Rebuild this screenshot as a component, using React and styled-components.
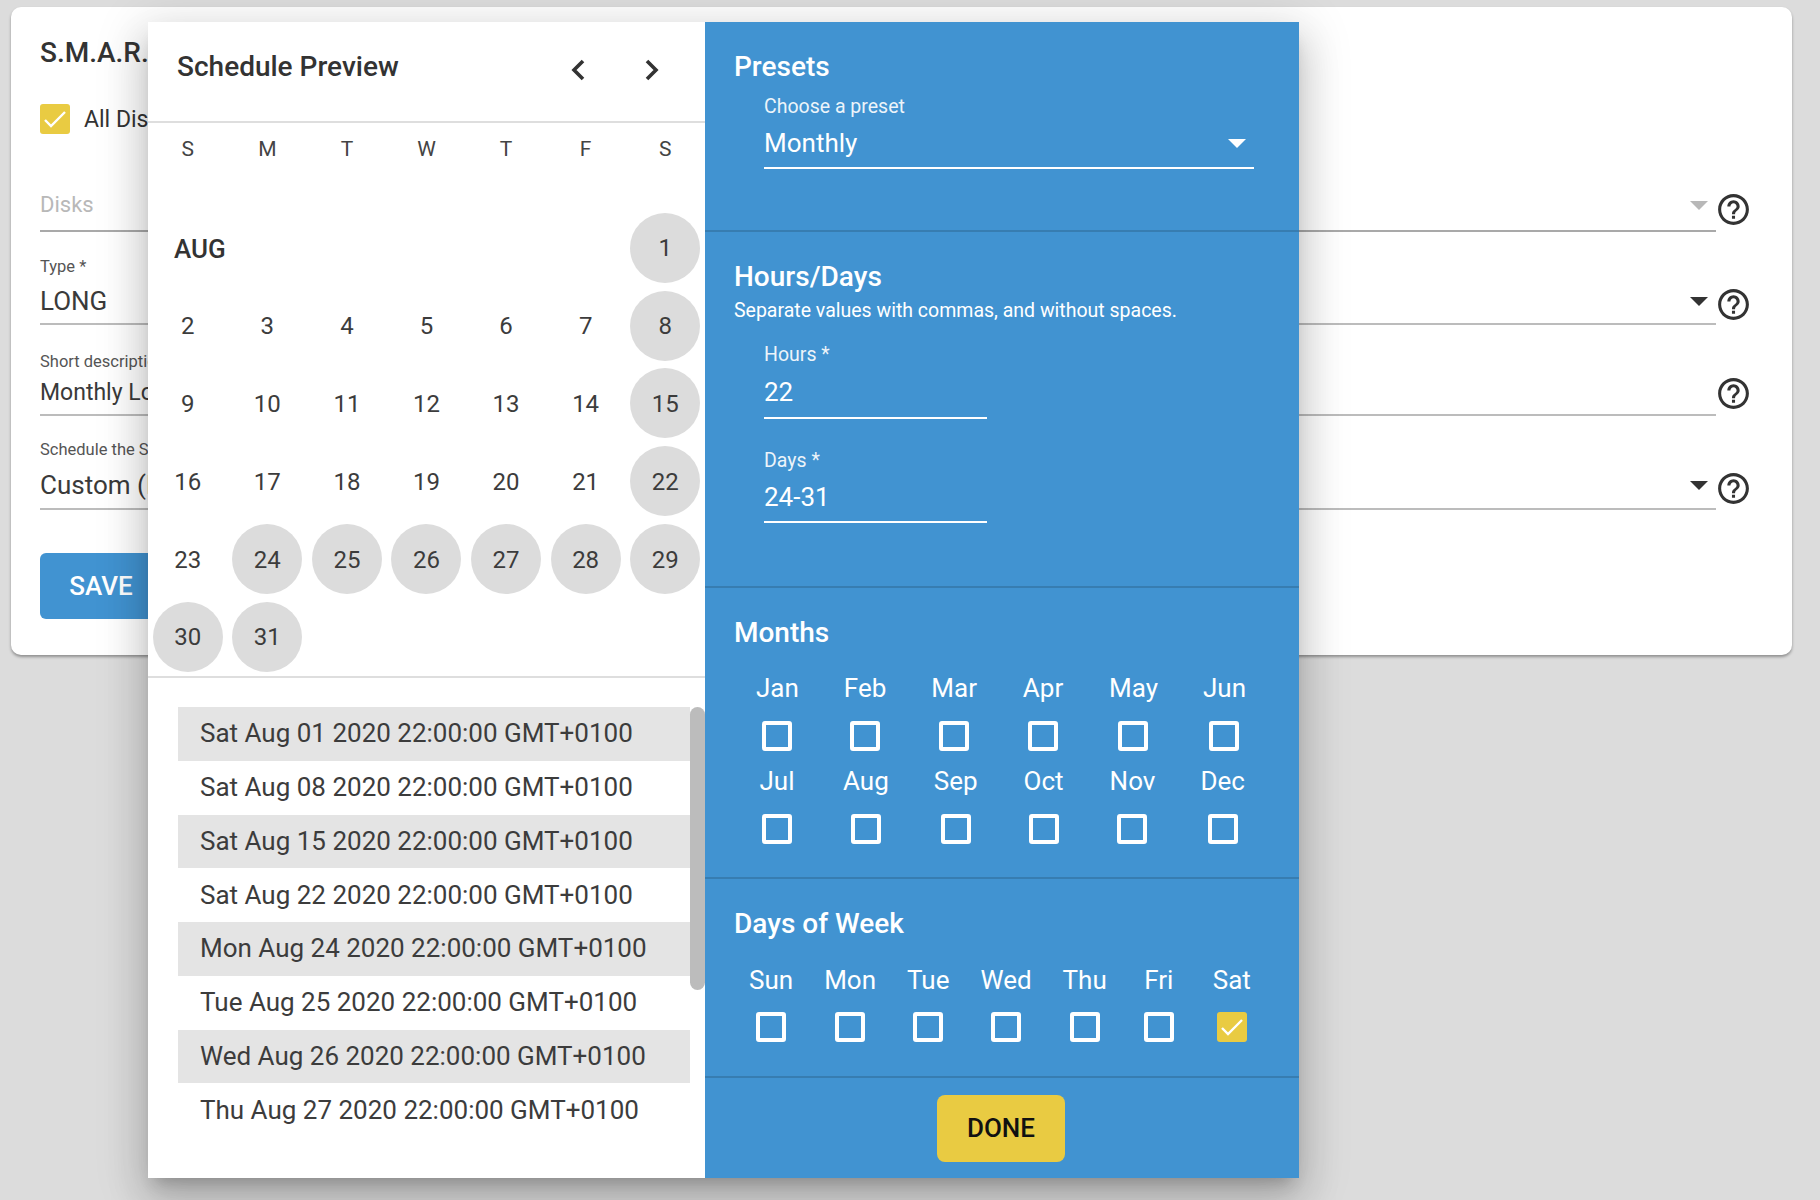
import React from "react";
import styled, { createGlobalStyle } from "styled-components";
import { MdHelpOutline } from "react-icons/md";

const GlobalStyle = createGlobalStyle`
  html, body {
    margin: 0;
    height: 1200px;
    overflow: hidden;
    background: #dcdcdc;
    font-family: Roboto, "Liberation Sans", sans-serif;
  }
`;

const Page = styled.div`
  position: relative;
  height: 1200px;
  padding: 7px 28px 0 11px;
  box-sizing: border-box;
`;

const Card = styled.div`
  height: 648px;
  box-sizing: border-box;
  padding: 30px 42px 0 29px;
  background: #fff;
  border-radius: 10px;
  box-shadow: 0 2px 3px rgba(0, 0, 0, 0.35);
  color: #333;
`;

const CardTitle = styled.div`
  font-size: 28px;
  font-weight: 500;
  line-height: 30px;
  padding-top: 1px;
  margin-bottom: -1px;
`;

const CheckRow = styled.div`
  display: flex;
  align-items: center;
  gap: 14px;
  margin-top: 37px;
  font-size: 23px;
`;

const Box = styled.div`
  flex: none;
  width: 30px;
  height: 30px;
  box-sizing: border-box;
  border-radius: 3px;
  border: ${(p) => (p.$checked ? "none" : "4px solid #fff")};
  background: ${(p) => (p.$checked ? "#e9cb42" : "transparent")};
  svg {
    display: block;
    width: 100%;
    height: 100%;
  }
`;

const FieldRow = styled.div`
  display: flex;
  align-items: flex-end;
  gap: 2px;
  margin-top: ${(p) => p.$top}px;
`;

const Field = styled.div`
  flex: 1;
  padding-bottom: ${(p) => p.$pad}px;
  border-bottom: 2px solid ${(p) => (p.$disabled ? "#a9a9a9" : "#bcbcbc")};
`;

const FieldLabel = styled.div`
  font-size: 16.5px;
  line-height: 20px;
  color: #555;
  margin-bottom: ${(p) => p.$gap}px;
`;

const ValueRow = styled.div`
  display: flex;
  align-items: center;
  justify-content: space-between;
  padding-right: 8px;
  font-size: ${(p) => p.$size || 26}px;
  line-height: ${(p) => p.$line || 32}px;
  color: ${(p) => (p.$muted ? "#b8b8b8" : "#3a3a3a")};
`;

const Arrow = styled.span`
  width: 0;
  height: 0;
  border-left: 9px solid transparent;
  border-right: 9px solid transparent;
  border-top: 9px solid ${(p) => p.$color || "#333"};
`;

const Help = styled(MdHelpOutline)`
  flex: none;
  display: block;
  width: 37px;
  height: 37px;
  color: #333;
  margin: 0 -2px ${(p) => p.$bottom}px -3px;
`;

const SaveButton = styled.div`
  display: flex;
  align-items: center;
  justify-content: center;
  width: 122px;
  height: 66px;
  margin-top: 43px;
  border-radius: 6px;
  background: #4193d1;
  color: #fff;
  font-size: 26px;
  font-weight: 500;
`;

const Dialog = styled.div`
  position: absolute;
  left: 148px;
  top: 22px;
  width: 1151px;
  height: 1156px;
  display: flex;
  box-shadow: 0 11px 15px -7px rgba(0, 0, 0, 0.2), 0 24px 38px 3px rgba(0, 0, 0, 0.14),
    0 9px 46px 8px rgba(0, 0, 0, 0.12);
`;

const PreviewPane = styled.div`
  width: 557px;
  background: #fff;
  color: #3c3c3c;
  overflow: hidden;
`;

const PreviewHeader = styled.div`
  display: flex;
  justify-content: space-between;
  align-items: flex-start;
  height: 70px;
  padding: 29px 33px 0 29px;
  border-bottom: 2px solid #dedede;
`;

const PreviewTitle = styled.div`
  font-size: 28px;
  font-weight: 500;
  line-height: 30px;
  padding-top: 1px;
  color: #333;
`;

const NavButtons = styled.div`
  display: flex;
  gap: 34px;
  margin-top: -1px;
`;

const NavButton = styled.div`
  width: 40px;
  height: 40px;
  display: flex;
  align-items: center;
  justify-content: center;
  svg {
    width: 14px;
    height: 22px;
  }
`;

const Week = styled.div`
  display: grid;
  grid-template-columns: repeat(7, 1fr);
  margin-top: 11px;
  height: 30px;
  line-height: 30px;
  font-size: 21px;
  text-align: center;
  color: #444;
`;

const Days = styled.div`
  display: grid;
  grid-template-columns: repeat(7, 1fr);
  grid-auto-rows: 77.8px;
  padding-top: 45px;
  height: 467px;
  border-bottom: 2px solid #dedede;
`;

const MonthName = styled.div`
  grid-column: span 6;
  display: flex;
  align-items: center;
  padding: 2px 0 0 26px;
  font-size: 26px;
  font-weight: 500;
  color: #333;
`;

const DayCell = styled.div`
  display: flex;
  align-items: center;
  justify-content: center;
`;

const DayCircle = styled.div`
  width: 70px;
  height: 70px;
  display: flex;
  align-items: center;
  justify-content: center;
  border-radius: 50%;
  font-size: 24px;
  padding-top: 1px;
  box-sizing: border-box;
  background: ${(p) => (p.$on ? "#dcdcdc" : "transparent")};
`;

const Occurrences = styled.div`
  display: flex;
  padding: 29px 0 0 30px;
`;

const OccurrenceList = styled.div`
  flex: 1;
`;

const Occurrence = styled.div`
  display: flex;
  align-items: center;
  height: 53.75px;
  padding: 0 0 1px 22px;
  box-sizing: border-box;
  font-size: 26px;
  background: ${(p) => (p.$shaded ? "#e4e4e4" : "transparent")};
`;

const ScrollThumb = styled.div`
  flex: none;
  width: 15px;
  height: 283px;
  border-radius: 8px;
  background: #bcbcbc;
`;

const OptionsPane = styled.div`
  width: 594px;
  display: flex;
  flex-direction: column;
  background: #4193d1;
  color: #fff;
`;

const Section = styled.div`
  height: ${(p) => p.$height}px;
  padding: ${(p) => p.$top}px 0 0 29px;
  box-sizing: border-box;
  border-bottom: 2px solid rgba(0, 0, 0, 0.15);
`;

const SectionTitle = styled.div`
  font-size: 28px;
  font-weight: 500;
  line-height: 30px;
  padding-top: 1px;
  margin-bottom: -1px;
`;

const Hint = styled.div`
  margin-top: 8px;
  font-size: 19.5px;
  line-height: 24px;
`;

const BlueField = styled.div`
  width: ${(p) => p.$width}px;
  margin: ${(p) => p.$top}px 0 0 30px;
`;

const BlueLabel = styled.div`
  font-size: 19.5px;
  line-height: 20px;
  opacity: 0.9;
`;

const BlueValue = styled.div`
  display: flex;
  align-items: center;
  justify-content: space-between;
  margin-top: ${(p) => p.$gap || 9}px;
  padding: 0 8px ${(p) => p.$pad || 7}px 0;
  border-bottom: 2px solid #fff;
  font-size: 26px;
  line-height: 34px;
`;

const ChoiceRow = styled.div`
  display: flex;
  gap: ${(p) => p.$gap}px;
  margin: ${(p) => p.$top}px 0 0 ${(p) => p.$left}px;
`;

const Choice = styled.div`
  display: flex;
  flex-direction: column;
  align-items: center;
  min-width: 42px;
  gap: ${(p) => p.$gap}px;
  font-size: 26px;
  line-height: 28px;
`;

const Footer = styled.div`
  flex: 1;
  display: flex;
  align-items: center;
  justify-content: center;
  padding-right: 2px;
`;

const DoneButton = styled.div`
  display: flex;
  align-items: center;
  justify-content: center;
  width: 128px;
  height: 67px;
  border-radius: 8px;
  background: #e9cb42;
  color: #111;
  font-size: 26px;
  font-weight: 500;
`;

const Tick = () => (
  <svg viewBox="0 0 30 30">
    <path d="M5 16l6 6L25 8" fill="none" stroke="#fff" strokeWidth="2.4" />
  </svg>
);

const weekLetters = ["S", "M", "T", "W", "T", "F", "S"];
const marked = [1, 8, 15, 22, 24, 25, 26, 27, 28, 29, 30, 31];
const days = Array.from({ length: 31 }, (_, i) => i + 1);

const occurrences = [
  "Sat Aug 01 2020 22:00:00 GMT+0100",
  "Sat Aug 08 2020 22:00:00 GMT+0100",
  "Sat Aug 15 2020 22:00:00 GMT+0100",
  "Sat Aug 22 2020 22:00:00 GMT+0100",
  "Mon Aug 24 2020 22:00:00 GMT+0100",
  "Tue Aug 25 2020 22:00:00 GMT+0100",
  "Wed Aug 26 2020 22:00:00 GMT+0100",
  "Thu Aug 27 2020 22:00:00 GMT+0100",
];

const monthRows = [
  ["Jan", "Feb", "Mar", "Apr", "May", "Jun"],
  ["Jul", "Aug", "Sep", "Oct", "Nov", "Dec"],
];
const weekDays = ["Sun", "Mon", "Tue", "Wed", "Thu", "Fri", "Sat"];

const App = () => {
  return (
    <Page>
      <GlobalStyle />
      <Card>
        <CardTitle>S.M.A.R.T. Test</CardTitle>
        <CheckRow>
          <Box $checked>
            <Tick />
          </Box>
          All Disks
        </CheckRow>
        <FieldRow $top={55}>
          <Field $pad={9} $disabled>
            <ValueRow $size={22} $muted>
              Disks
              <Arrow $color="#b8b8b8" />
            </ValueRow>
          </Field>
          <Help $bottom={4} />
        </FieldRow>
        <FieldRow $top={25}>
          <Field $pad={6}>
            <FieldLabel $gap={8}>Type *</FieldLabel>
            <ValueRow>
              LONG
              <Arrow />
            </ValueRow>
          </Field>
          <Help $bottom={2} />
        </FieldRow>
        <FieldRow $top={27}>
          <Field $pad={7}>
            <FieldLabel $gap={7}>Short description</FieldLabel>
            <ValueRow $size={23} $line={28}>
              Monthly Long
            </ValueRow>
          </Field>
          <Help $bottom={4} />
        </FieldRow>
        <FieldRow $top={24}>
          <Field $pad={7}>
            <FieldLabel $gap={9}>Schedule the S.M.A.R.T. Test</FieldLabel>
            <ValueRow>
              Custom (Monthly)
              <Arrow />
            </ValueRow>
          </Field>
          <Help $bottom={3} />
        </FieldRow>
        <SaveButton>SAVE</SaveButton>
      </Card>

      <Dialog>
        <PreviewPane>
          <PreviewHeader>
            <PreviewTitle>Schedule Preview</PreviewTitle>
            <NavButtons>
              <NavButton>
                <svg viewBox="0 0 14 22">
                  <path d="M12 2L3 11l9 9" fill="none" stroke="#333" strokeWidth="3.6" />
                </svg>
              </NavButton>
              <NavButton>
                <svg viewBox="0 0 14 22">
                  <path d="M2 2l9 9-9 9" fill="none" stroke="#333" strokeWidth="3.6" />
                </svg>
              </NavButton>
            </NavButtons>
          </PreviewHeader>
          <Week>
            {weekLetters.map((letter, i) => (
              <div key={i}>{letter}</div>
            ))}
          </Week>
          <Days>
            <MonthName>AUG</MonthName>
            {days.map((day) => (
              <DayCell key={day}>
                <DayCircle $on={marked.includes(day)}>{day}</DayCircle>
              </DayCell>
            ))}
          </Days>
          <Occurrences>
            <OccurrenceList>
              {occurrences.map((text, i) => (
                <Occurrence key={text} $shaded={i % 2 === 0}>
                  {text}
                </Occurrence>
              ))}
            </OccurrenceList>
            <ScrollThumb />
          </Occurrences>
        </PreviewPane>

        <OptionsPane>
          <Section $height={210} $top={29}>
            <SectionTitle>Presets</SectionTitle>
            <BlueField $width={490} $top={16}>
              <BlueLabel>Choose a preset</BlueLabel>
              <BlueValue>
                Monthly
                <Arrow $color="#fff" />
              </BlueValue>
            </BlueField>
          </Section>
          <Section $height={356} $top={29}>
            <SectionTitle>Hours/Days</SectionTitle>
            <Hint>Separate values with commas, and without spaces.</Hint>
            <BlueField $width={223} $top={22}>
              <BlueLabel>Hours *</BlueLabel>
              <BlueValue $gap={10} $pad={8}>
                22
              </BlueValue>
            </BlueField>
            <BlueField $width={223} $top={32}>
              <BlueLabel>Days *</BlueLabel>
              <BlueValue>24-31</BlueValue>
            </BlueField>
          </Section>
          <Section $height={291} $top={29}>
            <SectionTitle>Months</SectionTitle>
            {monthRows.map((row, r) => (
              <ChoiceRow key={r} $gap={45} $left={22} $top={r === 0 ? 27 : 16}>
                {row.map((month) => (
                  <Choice key={month} $gap={19}>
                    {month}
                    <Box />
                  </Choice>
                ))}
              </ChoiceRow>
            ))}
          </Section>
          <Section $height={199} $top={29}>
            <SectionTitle>Days of Week</SectionTitle>
            <ChoiceRow $gap={31} $left={15} $top={28}>
              {weekDays.map((day) => (
                <Choice key={day} $gap={18}>
                  {day}
                  <Box $checked={day === "Sat"}>{day === "Sat" && <Tick />}</Box>
                </Choice>
              ))}
            </ChoiceRow>
          </Section>
          <Footer>
            <DoneButton>DONE</DoneButton>
          </Footer>
        </OptionsPane>
      </Dialog>
    </Page>
  );
};

export default App;
